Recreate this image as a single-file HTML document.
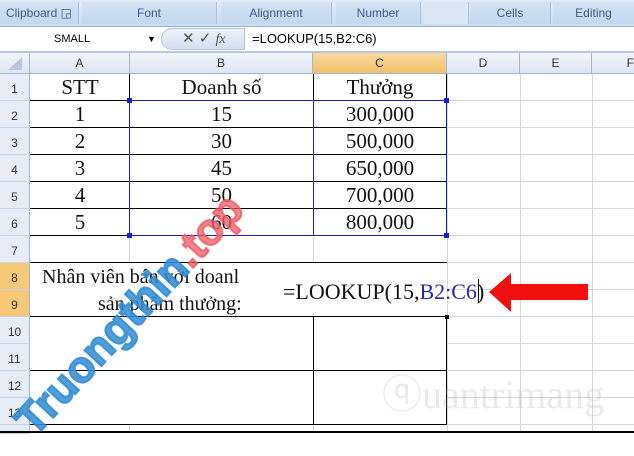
<!DOCTYPE html><html><head><meta charset="utf-8"><style>
body{margin:0;width:634px;height:433px;overflow:hidden;background:#fff;position:relative;font-family:"Liberation Sans",sans-serif}
.a{position:absolute}
.rib{left:0;top:0;width:634px;height:26px;background:linear-gradient(#e3edf9,#cadcf1);border-bottom:1px solid #9ab3d5}
.grp{top:2px;height:22px;font-size:12px;color:#3c5a8a;text-align:center;line-height:22px;border-right:1px solid #a9c0df;background:linear-gradient(#d5e3f4,#c3d7ee)}
.fb{left:0;top:27px;width:634px;height:24px;background:#fff;border-bottom:2px solid #b6c9e2}
.hdr{top:53px;height:20px;background:linear-gradient(#f3f6fb,#dde6f2);border-bottom:1px solid #9eb6ce;font-size:12px;color:#333;text-align:center;line-height:20px}
.rh{left:0;width:29px;background:#e6edf7;border-right:1px solid #9eb6ce;border-bottom:1px solid #c5d3e4;font-size:12px;color:#333;text-align:center}
.gv{top:74px;width:1px;height:359px;background:#d0d7e5}
.gh{left:30px;width:604px;height:1px;background:#d0d7e5}
.bk{background:#000}
.t{font-family:"Liberation Serif",serif;font-size:21px;color:#111;text-align:center;height:27px;line-height:27px}
</style></head><body>
<div class="a rib"></div>
<div class="a grp" style="left:0;width:78px">Clipboard ◲</div>
<div class="a grp" style="left:82px;width:134px">Font</div>
<div class="a grp" style="left:221px;width:110px">Alignment</div>
<div class="a grp" style="left:336px;width:84px">Number</div>
<div class="a grp" style="left:423px;width:45px;background:#dbe7f5"></div>
<div class="a grp" style="left:470px;width:80px">Cells</div>
<div class="a grp" style="left:553px;width:81px">Editing</div>
<div class="a fb"></div>
<div class="a" style="left:0;top:28px;width:160px;height:22px;font-size:11px;line-height:22px"><span style="margin-left:54px">SMALL</span><span style="position:absolute;left:147px;font-size:9px">▼</span></div>
<div class="a" style="left:161px;top:28px;width:84px;height:22px;border-radius:11px 0 0 11px;background:linear-gradient(#eef3fa,#d3def0);border:1px solid #b0c3de;box-sizing:border-box;font-size:15px;line-height:20px;color:#555"><span style="margin-left:20px">✕</span> <span>✓</span> <i style="font-family:'Liberation Serif';font-size:14px">fx</i></div>
<div class="a" style="left:252px;top:28px;font-size:13px;line-height:22px">=LOOKUP(15,B2:C6)</div>
<div class="a hdr" style="left:0;width:29px;border-right:1px solid #9eb6ce"></div>
<div class="a" style="left:8px;top:57px;width:0;height:0;border-left:14px solid transparent;border-bottom:13px solid #b8c8dc"></div>
<div class="a hdr" style="left:30px;width:99px;border-right:1px solid #9eb6ce">A</div>
<div class="a hdr" style="left:130px;width:182px;border-right:1px solid #9eb6ce">B</div>
<div class="a hdr" style="left:313px;width:133px;background:linear-gradient(#f9d99f,#f3c26a);border-right:1px solid #9eb6ce">C</div>
<div class="a hdr" style="left:447px;width:72px;border-right:1px solid #9eb6ce">D</div>
<div class="a hdr" style="left:520px;width:71px;border-right:1px solid #9eb6ce">E</div>
<div class="a hdr" style="left:592px;width:42px;text-align:right">F</div>
<div class="a gv" style="left:129px"></div><div class="a gv" style="left:313px"></div><div class="a gv" style="left:447px"></div><div class="a gv" style="left:520px"></div><div class="a gv" style="left:592px"></div>
<div class="a gh" style="top:100px"></div><div class="a gh" style="top:127px"></div><div class="a gh" style="top:154px"></div><div class="a gh" style="top:181px"></div><div class="a gh" style="top:208px"></div><div class="a gh" style="top:235px"></div><div class="a gh" style="top:262px"></div><div class="a gh" style="top:289px"></div><div class="a gh" style="top:316px"></div><div class="a gh" style="top:343px"></div><div class="a gh" style="top:370px"></div><div class="a gh" style="top:397px"></div><div class="a gh" style="top:424px"></div>
<div class="a" style="left:30px;top:263px;width:417px;height:53px;background:#fff"></div>
<div class="a" style="left:30px;top:317px;width:283px;height:107px;background:#fff"></div>
<div class="a" style="left:314px;top:317px;width:133px;height:107px;background:#fff"></div>
<div class="a rh" style="top:74px;height:26px;line-height:30px">1</div>
<div class="a rh" style="top:101px;height:26px;line-height:30px">2</div>
<div class="a rh" style="top:128px;height:26px;line-height:30px">3</div>
<div class="a rh" style="top:155px;height:26px;line-height:30px">4</div>
<div class="a rh" style="top:182px;height:26px;line-height:30px">5</div>
<div class="a rh" style="top:209px;height:26px;line-height:30px">6</div>
<div class="a rh" style="top:236px;height:26px;line-height:30px">7</div>
<div class="a rh" style="top:263px;height:26px;line-height:30px;background:#f7c878">8</div>
<div class="a rh" style="top:290px;height:26px;line-height:30px;background:#f7c878">9</div>
<div class="a rh" style="top:317px;height:26px;line-height:30px">10</div>
<div class="a rh" style="top:344px;height:26px;line-height:30px">11</div>
<div class="a rh" style="top:371px;height:26px;line-height:30px">12</div>
<div class="a rh" style="top:398px;height:26px;line-height:30px">13</div>
<div class="a rh" style="top:425px;height:8px"></div>
<div class="a bk" style="left:30px;top:100px;width:417px;height:1px"></div>
<div class="a bk" style="left:30px;top:127px;width:417px;height:1px"></div>
<div class="a bk" style="left:30px;top:154px;width:417px;height:1px"></div>
<div class="a bk" style="left:30px;top:181px;width:417px;height:1px"></div>
<div class="a bk" style="left:30px;top:208px;width:417px;height:1px"></div>
<div class="a bk" style="left:30px;top:235px;width:417px;height:1px"></div>
<div class="a bk" style="left:129px;top:74px;width:1px;height:161px"></div>
<div class="a bk" style="left:313px;top:74px;width:1px;height:161px"></div>
<div class="a bk" style="left:446px;top:74px;width:1px;height:27px"></div>
<div class="a bk" style="left:30px;top:262px;width:417px;height:1px"></div>
<div class="a bk" style="left:30px;top:316px;width:417px;height:1px"></div>
<div class="a bk" style="left:30px;top:370px;width:417px;height:1px"></div>
<div class="a bk" style="left:30px;top:424px;width:417px;height:1px"></div>
<div class="a bk" style="left:313px;top:316px;width:1px;height:108px"></div>
<div class="a bk" style="left:446px;top:316px;width:1px;height:108px"></div>
<div class="a bk" style="left:0;top:431px;width:634px;height:2px"></div>
<div class="a" style="left:129px;top:100px;width:316px;height:134px;border:1px solid #1f1fb0"></div>
<div class="a" style="left:313px;top:100px;width:1px;height:135px;background:#1f1fb0"></div>
<div class="a" style="left:127px;top:98px;width:5px;height:5px;background:#1a1adb"></div>
<div class="a" style="left:444px;top:98px;width:5px;height:5px;background:#1a1adb"></div>
<div class="a" style="left:127px;top:233px;width:5px;height:5px;background:#1a1adb"></div>
<div class="a" style="left:444px;top:233px;width:5px;height:5px;background:#1a1adb"></div>
<div class="a t" style="left:30px;top:74px;width:100px">STT</div>
<div class="a t" style="left:130px;top:74px;width:183px">Doanh số</div>
<div class="a t" style="left:313px;top:74px;width:134px">Thưởng</div>
<div class="a t" style="left:30px;top:101px;width:100px">1</div><div class="a t" style="left:130px;top:101px;width:183px">15</div><div class="a t" style="left:313px;top:101px;width:134px">300,000</div>
<div class="a t" style="left:30px;top:128px;width:100px">2</div><div class="a t" style="left:130px;top:128px;width:183px">30</div><div class="a t" style="left:313px;top:128px;width:134px">500,000</div>
<div class="a t" style="left:30px;top:155px;width:100px">3</div><div class="a t" style="left:130px;top:155px;width:183px">45</div><div class="a t" style="left:313px;top:155px;width:134px">650,000</div>
<div class="a t" style="left:30px;top:182px;width:100px">4</div><div class="a t" style="left:130px;top:182px;width:183px">50</div><div class="a t" style="left:313px;top:182px;width:134px">700,000</div>
<div class="a t" style="left:30px;top:209px;width:100px">5</div><div class="a t" style="left:130px;top:209px;width:183px">60</div><div class="a t" style="left:313px;top:209px;width:134px">800,000</div>
<div class="a t" style="left:42px;top:264px;text-align:left;font-size:20px;white-space:nowrap">Nhân viên bán với doanl</div>
<div class="a t" style="left:98px;top:291px;text-align:left;font-size:20px;white-space:nowrap">sản phẩm thưởng:</div>
<div class="a t" style="left:283px;top:278px;text-align:left;font-size:22px;white-space:nowrap">=LOOKUP(15,<span style="color:#2a2ab0">B2:C6</span>)</div>
<div class="a" style="left:478px;top:279px;width:1px;height:24px;background:#000"></div>
<div class="a" style="left:445px;top:315px;width:4px;height:4px;background:#000"></div>
<svg class="a" style="left:485px;top:270px" width="106" height="45"><polygon points="4,22 26,3 26,14 103,14 103,30 26,30 26,42" fill="#f01010"/></svg>
<div class="a" style="left:382px;top:362px;font-family:'Liberation Serif',serif;font-size:40px;color:rgba(170,170,170,0.25);white-space:nowrap">ⓠuantrimang</div>
<div class="a" style="left:-40px;top:290px;width:340px;text-align:center;transform:rotate(-47deg);font-family:'Liberation Sans',sans-serif;font-weight:bold;font-size:44px;color:rgba(50,140,210,0.85);white-space:nowrap;-webkit-text-stroke:2px rgba(50,140,210,0.85)">Truongthin<span style="color:rgba(235,90,100,0.75);-webkit-text-stroke:2px rgba(235,90,100,0.75)">.top</span></div>
</body></html>
